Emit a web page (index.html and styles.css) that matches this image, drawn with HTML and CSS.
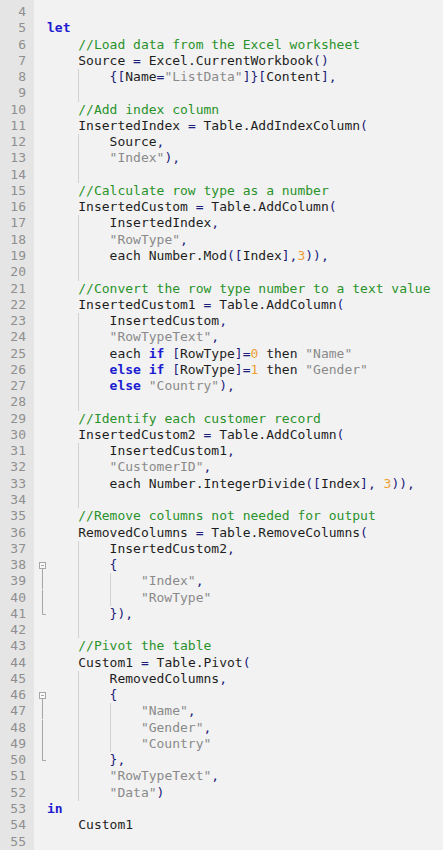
FILE: index.html
```html
<!DOCTYPE html>
<html>
<head>
<meta charset="utf-8">
<link rel="stylesheet" href="styles.css">
</head>
<body>
<div class="editor">
<div class="row"><span class="ln">4</span><span class="fold"></span><span class="code"></span></div>
<div class="row"><span class="ln">5</span><span class="fold"></span><span class="code"><span class="k">let</span></span></div>
<div class="row"><span class="ln">6</span><span class="fold"></span><span class="code"><span class="u"></span><span class="c">//Load data from the Excel worksheet</span></span></div>
<div class="row"><span class="ln">7</span><span class="fold"></span><span class="code"><span class="u"></span>Source <span class="p">=</span> Excel.CurrentWorkbook<span class="p">()</span></span></div>
<div class="row"><span class="ln">8</span><span class="fold"></span><span class="code"><span class="u"></span><span class="u g"></span><span class="p">{[</span>Name<span class="p">=</span><span class="s">"ListData"</span><span class="p">]}[</span>Content<span class="p">],</span></span></div>
<div class="row"><span class="ln">9</span><span class="fold"></span><span class="code"><span class="u"></span><span class="u g"></span></span></div>
<div class="row"><span class="ln">10</span><span class="fold"></span><span class="code"><span class="u"></span><span class="c">//Add index column</span></span></div>
<div class="row"><span class="ln">11</span><span class="fold"></span><span class="code"><span class="u"></span>InsertedIndex <span class="p">=</span> Table.AddIndexColumn<span class="p">(</span></span></div>
<div class="row"><span class="ln">12</span><span class="fold"></span><span class="code"><span class="u"></span><span class="u g"></span>Source<span class="p">,</span></span></div>
<div class="row"><span class="ln">13</span><span class="fold"></span><span class="code"><span class="u"></span><span class="u g"></span><span class="s">"Index"</span><span class="p">),</span></span></div>
<div class="row"><span class="ln">14</span><span class="fold"></span><span class="code"><span class="u"></span><span class="u g"></span></span></div>
<div class="row"><span class="ln">15</span><span class="fold"></span><span class="code"><span class="u"></span><span class="c">//Calculate row type as a number</span></span></div>
<div class="row"><span class="ln">16</span><span class="fold"></span><span class="code"><span class="u"></span>InsertedCustom <span class="p">=</span> Table.AddColumn<span class="p">(</span></span></div>
<div class="row"><span class="ln">17</span><span class="fold"></span><span class="code"><span class="u"></span><span class="u g"></span>InsertedIndex<span class="p">,</span></span></div>
<div class="row"><span class="ln">18</span><span class="fold"></span><span class="code"><span class="u"></span><span class="u g"></span><span class="s">"RowType"</span><span class="p">,</span></span></div>
<div class="row"><span class="ln">19</span><span class="fold"></span><span class="code"><span class="u"></span><span class="u g"></span>each Number.Mod<span class="p">([</span>Index<span class="p">],</span><span class="n">3</span><span class="p">)),</span></span></div>
<div class="row"><span class="ln">20</span><span class="fold"></span><span class="code"><span class="u"></span><span class="u g"></span></span></div>
<div class="row"><span class="ln">21</span><span class="fold"></span><span class="code"><span class="u"></span><span class="c">//Convert the row type number to a text value</span></span></div>
<div class="row"><span class="ln">22</span><span class="fold"></span><span class="code"><span class="u"></span>InsertedCustom1 <span class="p">=</span> Table.AddColumn<span class="p">(</span></span></div>
<div class="row"><span class="ln">23</span><span class="fold"></span><span class="code"><span class="u"></span><span class="u g"></span>InsertedCustom<span class="p">,</span></span></div>
<div class="row"><span class="ln">24</span><span class="fold"></span><span class="code"><span class="u"></span><span class="u g"></span><span class="s">"RowTypeText"</span><span class="p">,</span></span></div>
<div class="row"><span class="ln">25</span><span class="fold"></span><span class="code"><span class="u"></span><span class="u g"></span>each <span class="k">if</span> <span class="p">[</span>RowType<span class="p">]=</span><span class="n">0</span> then <span class="s">"Name"</span></span></div>
<div class="row"><span class="ln">26</span><span class="fold"></span><span class="code"><span class="u"></span><span class="u g"></span><span class="k">else</span> <span class="k">if</span> <span class="p">[</span>RowType<span class="p">]=</span><span class="n">1</span> then <span class="s">"Gender"</span></span></div>
<div class="row"><span class="ln">27</span><span class="fold"></span><span class="code"><span class="u"></span><span class="u g"></span><span class="k">else</span> <span class="s">"Country"</span><span class="p">),</span></span></div>
<div class="row"><span class="ln">28</span><span class="fold"></span><span class="code"><span class="u"></span><span class="u g"></span></span></div>
<div class="row"><span class="ln">29</span><span class="fold"></span><span class="code"><span class="u"></span><span class="c">//Identify each customer record</span></span></div>
<div class="row"><span class="ln">30</span><span class="fold"></span><span class="code"><span class="u"></span>InsertedCustom2 <span class="p">=</span> Table.AddColumn<span class="p">(</span></span></div>
<div class="row"><span class="ln">31</span><span class="fold"></span><span class="code"><span class="u"></span><span class="u g"></span>InsertedCustom1<span class="p">,</span></span></div>
<div class="row"><span class="ln">32</span><span class="fold"></span><span class="code"><span class="u"></span><span class="u g"></span><span class="s">"CustomerID"</span><span class="p">,</span></span></div>
<div class="row"><span class="ln">33</span><span class="fold"></span><span class="code"><span class="u"></span><span class="u g"></span>each Number.IntegerDivide<span class="p">([</span>Index<span class="p">],</span> <span class="n">3</span><span class="p">)),</span></span></div>
<div class="row"><span class="ln">34</span><span class="fold"></span><span class="code"><span class="u"></span><span class="u g"></span></span></div>
<div class="row"><span class="ln">35</span><span class="fold"></span><span class="code"><span class="u"></span><span class="c">//Remove columns not needed for output</span></span></div>
<div class="row"><span class="ln">36</span><span class="fold"></span><span class="code"><span class="u"></span>RemovedColumns <span class="p">=</span> Table.RemoveColumns<span class="p">(</span></span></div>
<div class="row"><span class="ln">37</span><span class="fold"></span><span class="code"><span class="u"></span><span class="u g"></span>InsertedCustom2<span class="p">,</span></span></div>
<div class="row"><span class="ln">38</span><span class="fold"><svg class="fm" viewBox="0 0 13 16.27"><line x1="8.5" y1="11.5" x2="8.5" y2="16.27"/><rect x="5.5" y="5.5" width="6" height="6"/><line x1="7" y1="8.5" x2="10" y2="8.5"/></svg></span><span class="code"><span class="u"></span><span class="u g"></span><span class="p">{</span></span></div>
<div class="row"><span class="ln">39</span><span class="fold"><svg class="fm" viewBox="0 0 13 16.27"><line x1="8.5" y1="0" x2="8.5" y2="16.27"/></svg></span><span class="code"><span class="u"></span><span class="u g"></span><span class="u g"></span><span class="s">"Index"</span><span class="p">,</span></span></div>
<div class="row"><span class="ln">40</span><span class="fold"><svg class="fm" viewBox="0 0 13 16.27"><line x1="8.5" y1="0" x2="8.5" y2="16.27"/></svg></span><span class="code"><span class="u"></span><span class="u g"></span><span class="u g"></span><span class="s">"RowType"</span></span></div>
<div class="row"><span class="ln">41</span><span class="fold"><svg class="fm" viewBox="0 0 13 16.27"><polyline points="8.5,0 8.5,8.5 12,8.5"/></svg></span><span class="code"><span class="u"></span><span class="u g"></span><span class="p">}),</span></span></div>
<div class="row"><span class="ln">42</span><span class="fold"></span><span class="code"><span class="u"></span><span class="u g"></span></span></div>
<div class="row"><span class="ln">43</span><span class="fold"></span><span class="code"><span class="u"></span><span class="c">//Pivot the table</span></span></div>
<div class="row"><span class="ln">44</span><span class="fold"></span><span class="code"><span class="u"></span>Custom1 <span class="p">=</span> Table.Pivot<span class="p">(</span></span></div>
<div class="row"><span class="ln">45</span><span class="fold"></span><span class="code"><span class="u"></span><span class="u g"></span>RemovedColumns<span class="p">,</span></span></div>
<div class="row"><span class="ln">46</span><span class="fold"><svg class="fm" viewBox="0 0 13 16.27"><line x1="8.5" y1="11.5" x2="8.5" y2="16.27"/><rect x="5.5" y="5.5" width="6" height="6"/><line x1="7" y1="8.5" x2="10" y2="8.5"/></svg></span><span class="code"><span class="u"></span><span class="u g"></span><span class="p">{</span></span></div>
<div class="row"><span class="ln">47</span><span class="fold"><svg class="fm" viewBox="0 0 13 16.27"><line x1="8.5" y1="0" x2="8.5" y2="16.27"/></svg></span><span class="code"><span class="u"></span><span class="u g"></span><span class="u g"></span><span class="s">"Name"</span><span class="p">,</span></span></div>
<div class="row"><span class="ln">48</span><span class="fold"><svg class="fm" viewBox="0 0 13 16.27"><line x1="8.5" y1="0" x2="8.5" y2="16.27"/></svg></span><span class="code"><span class="u"></span><span class="u g"></span><span class="u g"></span><span class="s">"Gender"</span><span class="p">,</span></span></div>
<div class="row"><span class="ln">49</span><span class="fold"><svg class="fm" viewBox="0 0 13 16.27"><line x1="8.5" y1="0" x2="8.5" y2="16.27"/></svg></span><span class="code"><span class="u"></span><span class="u g"></span><span class="u g"></span><span class="s">"Country"</span></span></div>
<div class="row"><span class="ln">50</span><span class="fold"><svg class="fm" viewBox="0 0 13 16.27"><polyline points="8.5,0 8.5,8.5 12,8.5"/></svg></span><span class="code"><span class="u"></span><span class="u g"></span><span class="p">},</span></span></div>
<div class="row"><span class="ln">51</span><span class="fold"></span><span class="code"><span class="u"></span><span class="u g"></span><span class="s">"RowTypeText"</span><span class="p">,</span></span></div>
<div class="row"><span class="ln">52</span><span class="fold"></span><span class="code"><span class="u"></span><span class="u g"></span><span class="s">"Data"</span><span class="p">)</span></span></div>
<div class="row"><span class="ln">53</span><span class="fold"></span><span class="code"><span class="k">in</span></span></div>
<div class="row"><span class="ln">54</span><span class="fold"></span><span class="code"><span class="u"></span>Custom1</span></div>
<div class="row"><span class="ln">55</span><span class="fold"></span><span class="code"></span></div>
</div>
</body>
</html>
```
FILE: styles.css
```css
html, body {
  margin: 0;
  padding: 0;
  background: #f2f2f2;
}

.editor {
  box-sizing: border-box;
  min-height: 850px;
  padding-top: 4px;
  background: linear-gradient(to right, #e5e5e5 34px, #f2f2f2 34px);
  font-family: "DejaVu Sans Mono", "Liberation Mono", monospace;
  font-size: 13px;
}

.row {
  display: flex;
  height: 16.27px;
  line-height: 16.27px;
}

.ln {
  flex: none;
  width: 34px;
  box-sizing: border-box;
  padding-right: 8px;
  text-align: right;
  color: #8f8f8f;
}

.fold {
  flex: none;
  width: 13px;
  height: 16.27px;
}

.fm {
  display: block;
  width: 13px;
  height: 16.27px;
  fill: none;
  stroke: #a6a6a6;
  stroke-width: 1;
}

.fm rect {
  fill: #fafafa;
}

.code {
  white-space: pre;
  color: #1e1e1e;
}

.u {
  display: inline-block;
  width: 4ch;
  height: 16.27px;
  vertical-align: top;
}

.g {
  box-shadow: inset 1px 0 #d2d2d2;
}

.k {
  color: #1c1cd0;
  font-weight: bold;
}

.c {
  color: #2a922a;
}

.s {
  color: #8a8a8a;
}

.n {
  color: #ee9f35;
}

.p {
  color: #1c1c7a;
}
```
